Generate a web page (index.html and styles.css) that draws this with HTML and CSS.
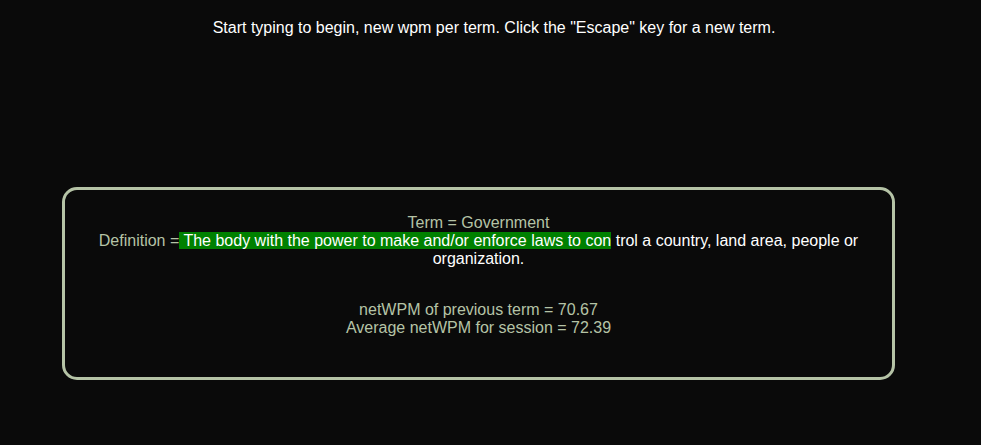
FILE: index.html
```html
<!DOCTYPE html>
<html>
<head>
<meta charset="utf-8">
<link rel="stylesheet" href="styles.css">
</head>
<body>
<p class="intro">Start typing to begin, new wpm per term. Click the "Escape" key for a new term.</p>
<div class="card">
  <div class="term">Term = Government</div>
  <div class="definition">Definition =<span class="typed"> The body with the power to make and/or enforce laws to con</span><span class="rest"> trol a country, land area, people or organization.</span></div>
  <div class="stats">
    <div>netWPM of previous term = 70.67</div>
    <div>Average netWPM for session = 72.39</div>
  </div>
</div>
</body>
</html>
```
FILE: styles.css
```css
html, body {
  margin: 0;
  padding: 0;
  background: #0a0a0a;
}
body {
  font-family: "Liberation Sans", Arial, sans-serif;
  font-size: 16px;
  width: 981px;
  height: 445px;
  overflow: hidden;
}
.intro {
  margin: 0;
  padding: 19px 0 0 7px;
  text-align: center;
  color: #ffffff;
}
.card {
  box-sizing: border-box;
  margin: 150px 0 0 62px;
  width: 833px;
  height: 193px;
  border: 3px solid #b5c3a6;
  border-radius: 15px;
  padding: 24px 30px 0 30px;
  text-align: center;
  color: #b5c3a6;
}
.definition {
  color: #b5c3a6;
}
.typed {
  background: #008000;
  color: #ffffff;
}
.rest {
  color: #ffffff;
}
.stats {
  margin-top: 33px;
}
```
